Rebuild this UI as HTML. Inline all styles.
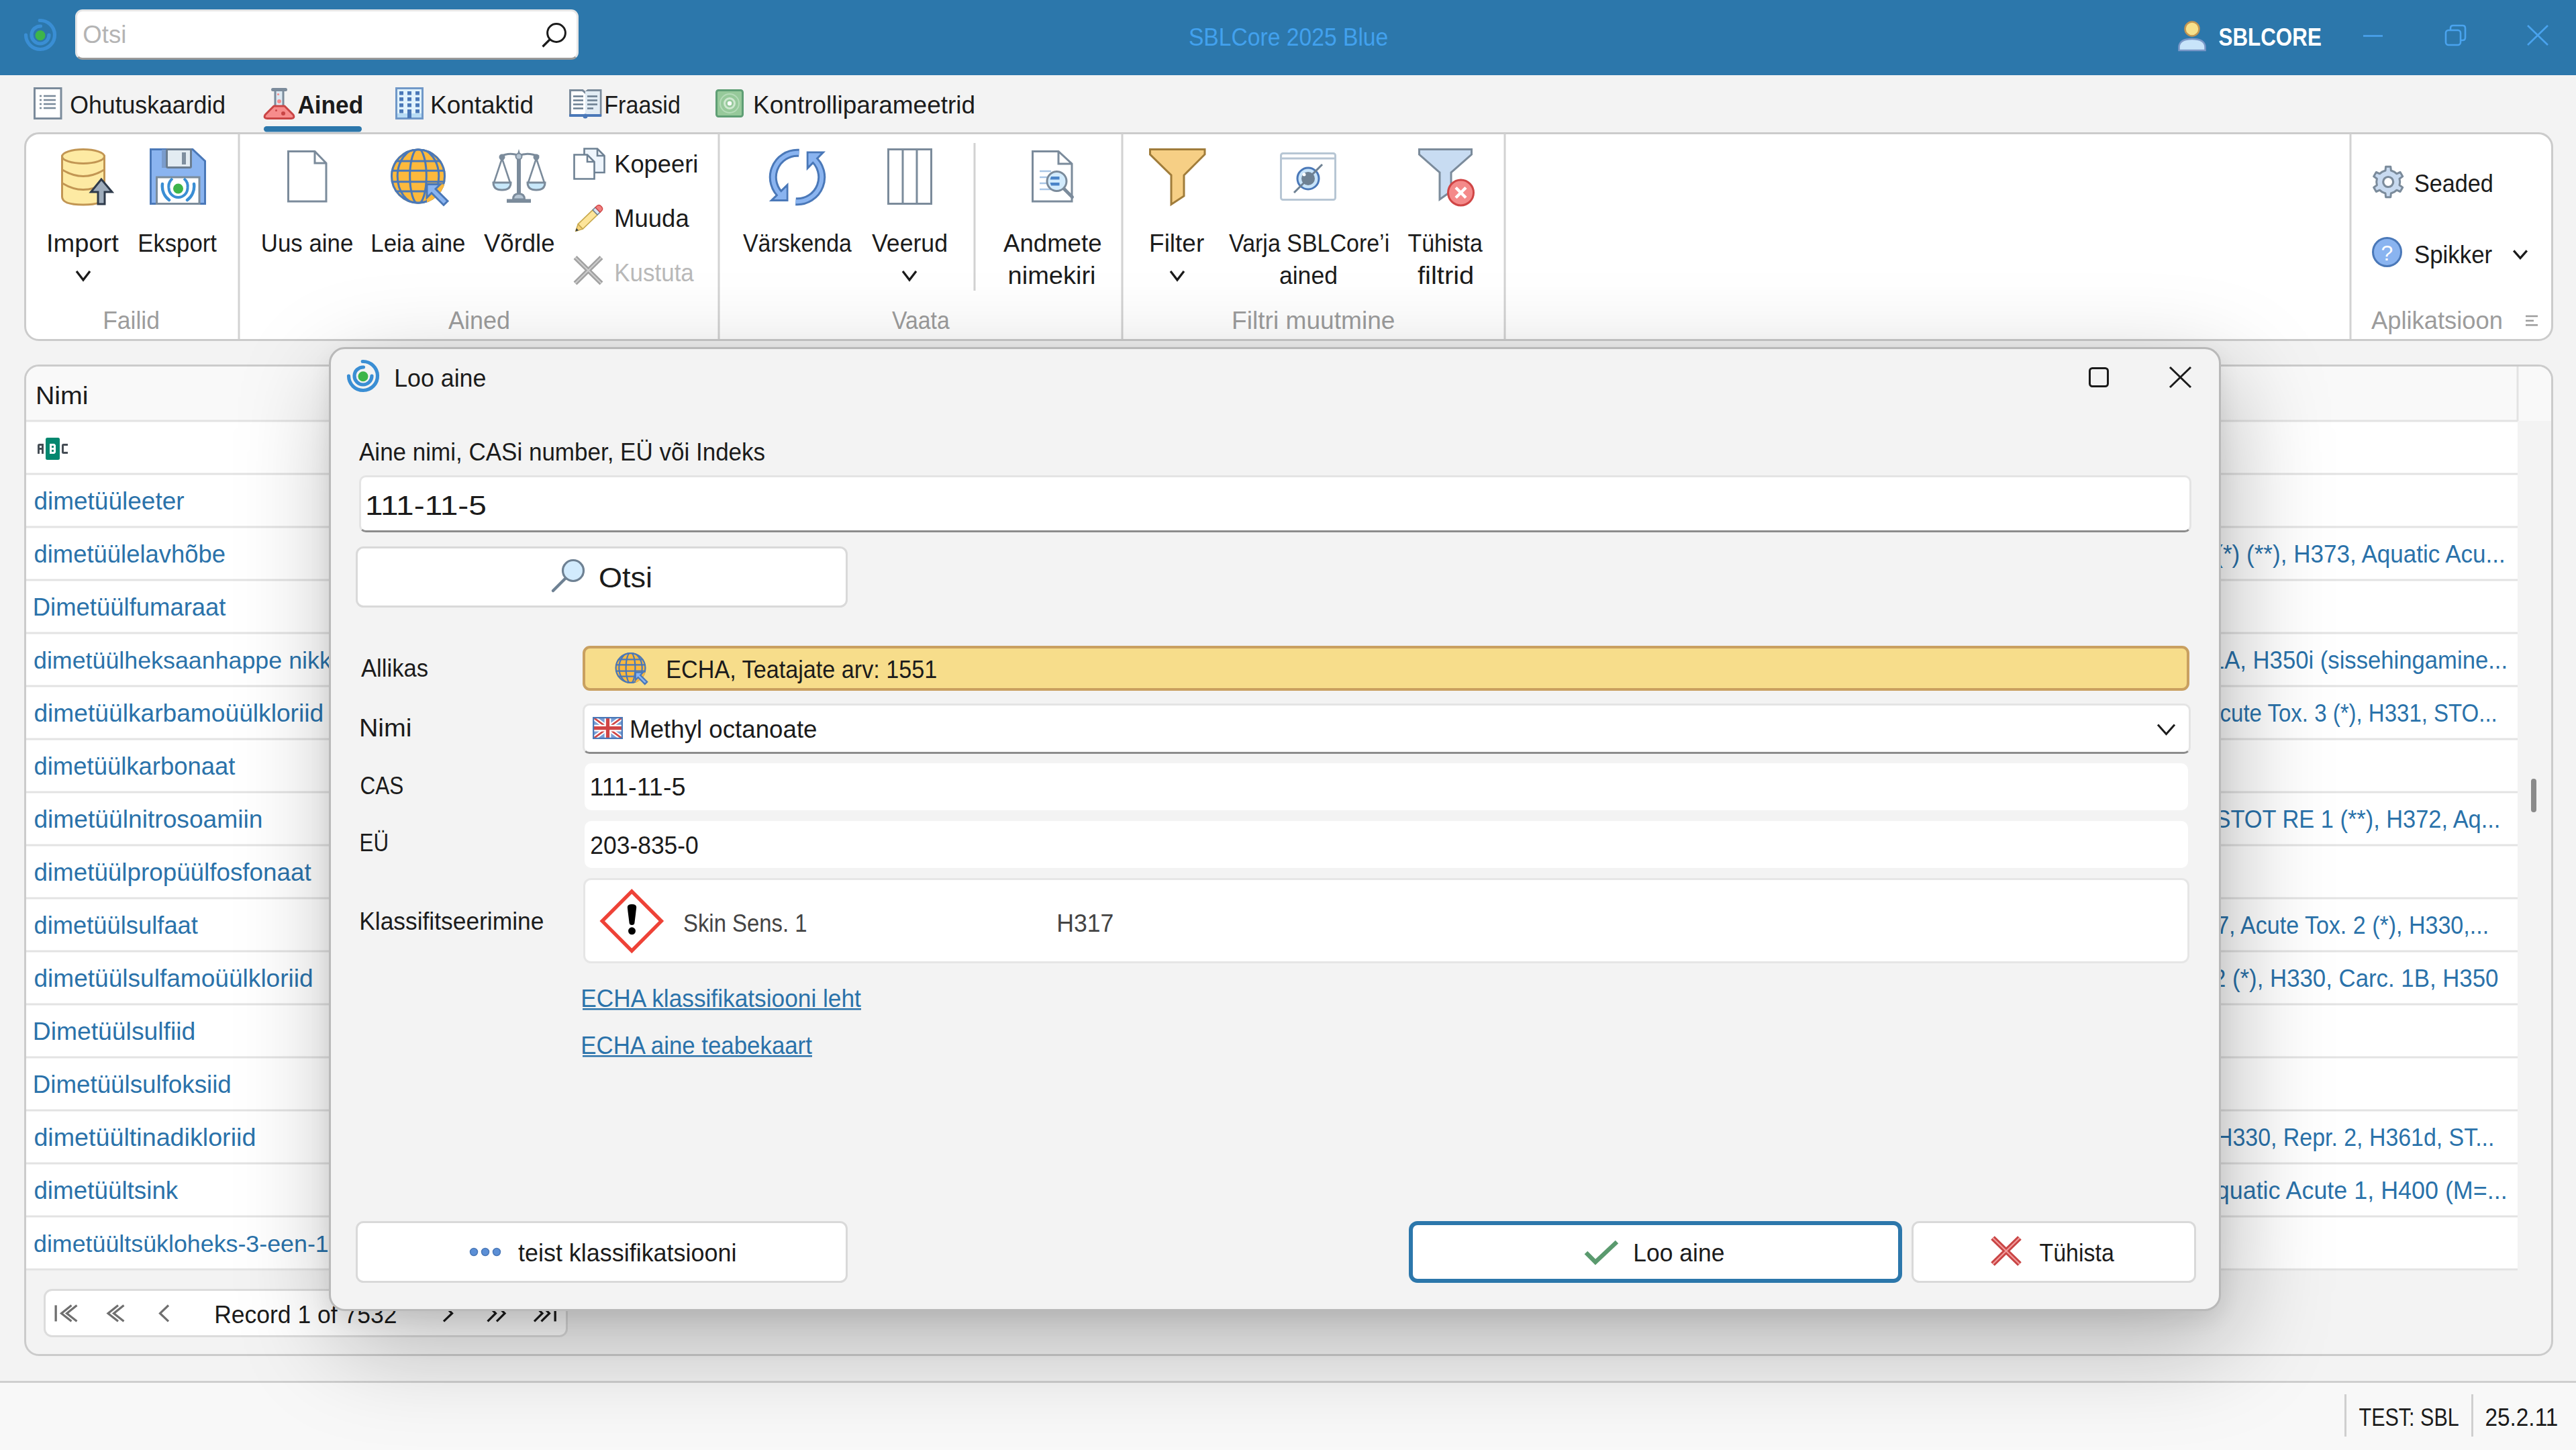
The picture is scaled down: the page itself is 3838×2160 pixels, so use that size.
<!DOCTYPE html>
<html><head><meta charset="utf-8"><title>SBLCore</title><style>
html,body{margin:0;padding:0;}
body{width:3838px;height:2160px;overflow:hidden;background:#f3f3f3;position:relative;font-family:'Liberation Sans', sans-serif;}
.abs{position:absolute;box-sizing:border-box;}
svg text{font-family:'Liberation Sans', sans-serif;}
</style></head>
<body>
<div class="abs" style="left:0;top:0;width:3838px;height:112px;background:#2c77ab"></div>
<div class="abs" style="left:112px;top:14px;width:750px;height:75px;background:#fff;border-radius:11px;border:3px solid #e6e6e6;border-bottom:3px solid #9a9a9a;"></div>
<div class="abs" style="left:36px;top:197px;width:3768px;height:311px;background:#fff;border:3px solid #cbcbcb;border-radius:22px"></div>
<div class="abs" style="left:36px;top:543px;width:3768px;height:1477px;background:#f3f3f3;border:3px solid #cbcbcb;border-radius:22px;overflow:hidden">
  <div class="abs" style="left:0;top:0;width:3762px;height:81px;background:#f9f9f9"></div>
  <div class="abs" style="left:0;top:82px;width:3712px;height:1263px;background:#fff"></div>
</div>
<div class="abs" style="left:0;top:2057px;width:3838px;height:103px;background:#f8f8f8;border-top:3px solid #cfcfcf"></div>
<svg class="abs" style="left:0;top:0" width="3838" height="2160" viewBox="0 0 3838 2160">
<rect x="354.5" y="199" width="3" height="306" fill="#d2d2d2"/>
<rect x="1069.5" y="199" width="3" height="306" fill="#d2d2d2"/>
<rect x="1670.5" y="199" width="3" height="306" fill="#d2d2d2"/>
<rect x="2240.5" y="199" width="3" height="306" fill="#d2d2d2"/>
<rect x="3500.5" y="199" width="3" height="306" fill="#d2d2d2"/>
<rect x="1450.5" y="213" width="3" height="220" fill="#d2d2d2"/>
<rect x="39" y="625.5" width="3712" height="3" fill="#e3e3e3"/>
<rect x="39" y="704.5" width="3712" height="3" fill="#e3e3e3"/>
<rect x="39" y="783.5" width="3712" height="3" fill="#e3e3e3"/>
<rect x="39" y="862.5" width="3712" height="3" fill="#e3e3e3"/>
<rect x="39" y="941.5" width="3712" height="3" fill="#e3e3e3"/>
<rect x="39" y="1020.5" width="3712" height="3" fill="#e3e3e3"/>
<rect x="39" y="1099.5" width="3712" height="3" fill="#e3e3e3"/>
<rect x="39" y="1178.5" width="3712" height="3" fill="#e3e3e3"/>
<rect x="39" y="1257.5" width="3712" height="3" fill="#e3e3e3"/>
<rect x="39" y="1336.5" width="3712" height="3" fill="#e3e3e3"/>
<rect x="39" y="1415.5" width="3712" height="3" fill="#e3e3e3"/>
<rect x="39" y="1494.5" width="3712" height="3" fill="#e3e3e3"/>
<rect x="39" y="1573.5" width="3712" height="3" fill="#e3e3e3"/>
<rect x="39" y="1652.5" width="3712" height="3" fill="#e3e3e3"/>
<rect x="39" y="1731.5" width="3712" height="3" fill="#e3e3e3"/>
<rect x="39" y="1810.5" width="3712" height="3" fill="#e3e3e3"/>
<rect x="39" y="1889.5" width="3712" height="3" fill="#e3e3e3"/>
<rect x="3749.5" y="546" width="3" height="81" fill="#e3e3e3"/>
<rect x="3771" y="1160" width="8" height="50" rx="4" fill="#8a8a8a"/>
<rect x="66.5" y="1921.5" width="778" height="69" rx="11" fill="#fff" stroke="#dcdcdc" stroke-width="3"/>
<rect x="3493" y="2077" width="3" height="63" fill="#cfcfcf"/>
<rect x="3682" y="2077" width="3" height="63" fill="#cfcfcf"/>
<rect x="393" y="188" width="146" height="8.5" rx="4.2" fill="#2c77ab"/>
<text x="50" y="996" font-size="35.8" fill="#2a72aa">dimetüülheksaanhappe nikkel</text>
<text x="50" y="1865" font-size="35.8" fill="#2a72aa">dimetüültsükloheks-3-een-1-karbaldehüüd</text>
<text x="2749.0" y="838" font-size="37" fill="#2a72aa" font-weight="400" textLength="983.8" lengthAdjust="spacingAndGlyphs">Acute Tox. 4 (*), H332, STOT RE 2 (*) (**), H373, Aquatic Acu...</text>
<text x="2886.5" y="996" font-size="37" fill="#2a72aa" font-weight="400" textLength="849.6" lengthAdjust="spacingAndGlyphs">Skin Sens. 1, H317, Carc. 1A, H350i (sissehingamine...</text>
<text x="3285.6" y="1075" font-size="37" fill="#2a72aa" font-weight="400" textLength="435.2" lengthAdjust="spacingAndGlyphs">Acute Tox. 3 (*), H331, STO...</text>
<text x="2792.7" y="1233" font-size="37" fill="#2a72aa" font-weight="400" textLength="932.7" lengthAdjust="spacingAndGlyphs">Acute Tox. 3 (*), H301, Carc. 1B, STOT RE 1 (**), H372, Aq...</text>
<text x="3029.8" y="1391" font-size="37" fill="#2a72aa" font-weight="400" textLength="678.3" lengthAdjust="spacingAndGlyphs">Skin Sens. 1, H317, Acute Tox. 2 (*), H330,...</text>
<text x="3125.5" y="1470" font-size="37" fill="#2a72aa" font-weight="400" textLength="596.9" lengthAdjust="spacingAndGlyphs">Acute Tox. 2 (*), H330, Carc. 1B, H350</text>
<text x="3052.1" y="1707" font-size="37" fill="#2a72aa" font-weight="400" textLength="664.3" lengthAdjust="spacingAndGlyphs">Acute Tox. 2 (*), H330, Repr. 2, H361d, ST...</text>
<text x="2909.5" y="1786" font-size="37" fill="#2a72aa" font-weight="400" textLength="826.1" lengthAdjust="spacingAndGlyphs">Acute Tox. 3 (*), H301, Aquatic Acute 1, H400 (M=...</text>
<text x="123.3" y="64" font-size="37" fill="#b4b4b4" font-weight="400" textLength="65.1" lengthAdjust="spacingAndGlyphs">Otsi</text>
<text x="1770.9" y="68" font-size="37" fill="#42a1ee" font-weight="400" textLength="297.4" lengthAdjust="spacingAndGlyphs">SBLCore 2025 Blue</text>
<text x="3305.5" y="68" font-size="37" fill="#ffffff" font-weight="700" textLength="153.3" lengthAdjust="spacingAndGlyphs">SBLCORE</text>
<text x="104.3" y="169" font-size="37" fill="#1b1b1b" font-weight="400" textLength="231.7" lengthAdjust="spacingAndGlyphs">Ohutuskaardid</text>
<text x="443.4" y="169" font-size="37" fill="#1b1b1b" font-weight="700" textLength="97.8" lengthAdjust="spacingAndGlyphs">Ained</text>
<text x="641.1" y="169" font-size="37" fill="#1b1b1b" font-weight="400" textLength="154.0" lengthAdjust="spacingAndGlyphs">Kontaktid</text>
<text x="900.3" y="169" font-size="37" fill="#1b1b1b" font-weight="400" textLength="113.6" lengthAdjust="spacingAndGlyphs">Fraasid</text>
<text x="1122.1" y="169" font-size="37" fill="#1b1b1b" font-weight="400" textLength="331.0" lengthAdjust="spacingAndGlyphs">Kontrolliparameetrid</text>
<text x="69.0" y="375" font-size="37" fill="#1b1b1b" font-weight="400" textLength="107.8" lengthAdjust="spacingAndGlyphs">Import</text>
<text x="205.3" y="375" font-size="37" fill="#1b1b1b" font-weight="400" textLength="117.6" lengthAdjust="spacingAndGlyphs">Eksport</text>
<text x="388.8" y="375" font-size="37" fill="#1b1b1b" font-weight="400" textLength="137.6" lengthAdjust="spacingAndGlyphs">Uus aine</text>
<text x="552.3" y="375" font-size="37" fill="#1b1b1b" font-weight="400" textLength="141.1" lengthAdjust="spacingAndGlyphs">Leia aine</text>
<text x="721.0" y="375" font-size="37" fill="#1b1b1b" font-weight="400" textLength="105.5" lengthAdjust="spacingAndGlyphs">Võrdle</text>
<text x="915.2" y="257" font-size="37" fill="#1b1b1b" font-weight="400" textLength="125.2" lengthAdjust="spacingAndGlyphs">Kopeeri</text>
<text x="915.1" y="338" font-size="37" fill="#1b1b1b" font-weight="400" textLength="111.6" lengthAdjust="spacingAndGlyphs">Muuda</text>
<text x="915.3" y="419" font-size="37" fill="#b9b9b9" font-weight="400" textLength="118.5" lengthAdjust="spacingAndGlyphs">Kustuta</text>
<text x="1107.0" y="375" font-size="37" fill="#1b1b1b" font-weight="400" textLength="161.8" lengthAdjust="spacingAndGlyphs">Värskenda</text>
<text x="1299.0" y="375" font-size="37" fill="#1b1b1b" font-weight="400" textLength="113.0" lengthAdjust="spacingAndGlyphs">Veerud</text>
<text x="1495.0" y="375" font-size="37" fill="#1b1b1b" font-weight="400" textLength="146.5" lengthAdjust="spacingAndGlyphs">Andmete</text>
<text x="1501.6" y="423" font-size="37" fill="#1b1b1b" font-weight="400" textLength="130.9" lengthAdjust="spacingAndGlyphs">nimekiri</text>
<text x="1712.1" y="375" font-size="37" fill="#1b1b1b" font-weight="400" textLength="82.1" lengthAdjust="spacingAndGlyphs">Filter</text>
<text x="1831.0" y="375" font-size="37" fill="#1b1b1b" font-weight="400" textLength="239.2" lengthAdjust="spacingAndGlyphs">Varja SBLCore’i</text>
<text x="1905.9" y="423" font-size="37" fill="#1b1b1b" font-weight="400" textLength="87.1" lengthAdjust="spacingAndGlyphs">ained</text>
<text x="2097.5" y="375" font-size="37" fill="#1b1b1b" font-weight="400" textLength="111.3" lengthAdjust="spacingAndGlyphs">Tühista</text>
<text x="2112.0" y="423" font-size="37" fill="#1b1b1b" font-weight="400" textLength="84.2" lengthAdjust="spacingAndGlyphs">filtrid</text>
<text x="3596.9" y="286" font-size="37" fill="#1b1b1b" font-weight="400" textLength="118.0" lengthAdjust="spacingAndGlyphs">Seaded</text>
<text x="3596.9" y="392" font-size="37" fill="#1b1b1b" font-weight="400" textLength="116.3" lengthAdjust="spacingAndGlyphs">Spikker</text>
<text x="153.2" y="490" font-size="37" fill="#9c9c9c" font-weight="400" textLength="84.8" lengthAdjust="spacingAndGlyphs">Failid</text>
<text x="668.0" y="490" font-size="37" fill="#9c9c9c" font-weight="400" textLength="92.0" lengthAdjust="spacingAndGlyphs">Ained</text>
<text x="1329.0" y="490" font-size="37" fill="#9c9c9c" font-weight="400" textLength="85.8" lengthAdjust="spacingAndGlyphs">Vaata</text>
<text x="1835.1" y="490" font-size="37" fill="#9c9c9c" font-weight="400" textLength="243.4" lengthAdjust="spacingAndGlyphs">Filtri muutmine</text>
<text x="3533.0" y="490" font-size="37" fill="#9c9c9c" font-weight="400" textLength="196.0" lengthAdjust="spacingAndGlyphs">Aplikatsioon</text>
<text x="52.9" y="602" font-size="37" fill="#1b1b1b" font-weight="400" textLength="78.7" lengthAdjust="spacingAndGlyphs">Nimi</text>
<text x="50.4" y="759" font-size="37" fill="#2a72aa" font-weight="400" textLength="224.2" lengthAdjust="spacingAndGlyphs">dimetüüleeter</text>
<text x="50.5" y="838" font-size="37" fill="#2a72aa" font-weight="400" textLength="285.6" lengthAdjust="spacingAndGlyphs">dimetüülelavhõbe</text>
<text x="48.8" y="917" font-size="37" fill="#2a72aa" font-weight="400" textLength="287.7" lengthAdjust="spacingAndGlyphs">Dimetüülfumaraat</text>
<text x="50.4" y="1075" font-size="37" fill="#2a72aa" font-weight="400" textLength="431.8" lengthAdjust="spacingAndGlyphs">dimetüülkarbamoüülkloriid</text>
<text x="50.5" y="1154" font-size="37" fill="#2a72aa" font-weight="400" textLength="299.9" lengthAdjust="spacingAndGlyphs">dimetüülkarbonaat</text>
<text x="50.4" y="1233" font-size="37" fill="#2a72aa" font-weight="400" textLength="341.1" lengthAdjust="spacingAndGlyphs">dimetüülnitrosoamiin</text>
<text x="50.4" y="1312" font-size="37" fill="#2a72aa" font-weight="400" textLength="413.3" lengthAdjust="spacingAndGlyphs">dimetüülpropüülfosfonaat</text>
<text x="50.5" y="1391" font-size="37" fill="#2a72aa" font-weight="400" textLength="244.4" lengthAdjust="spacingAndGlyphs">dimetüülsulfaat</text>
<text x="50.4" y="1470" font-size="37" fill="#2a72aa" font-weight="400" textLength="416.3" lengthAdjust="spacingAndGlyphs">dimetüülsulfamoüülkloriid</text>
<text x="48.7" y="1549" font-size="37" fill="#2a72aa" font-weight="400" textLength="242.6" lengthAdjust="spacingAndGlyphs">Dimetüülsulfiid</text>
<text x="48.7" y="1628" font-size="37" fill="#2a72aa" font-weight="400" textLength="296.1" lengthAdjust="spacingAndGlyphs">Dimetüülsulfoksiid</text>
<text x="50.4" y="1707" font-size="37" fill="#2a72aa" font-weight="400" textLength="331.0" lengthAdjust="spacingAndGlyphs">dimetüültinadikloriid</text>
<text x="50.4" y="1786" font-size="37" fill="#2a72aa" font-weight="400" textLength="214.9" lengthAdjust="spacingAndGlyphs">dimetüültsink</text>
<text x="319.2" y="1971" font-size="37" fill="#1b1b1b" font-weight="400" textLength="272.2" lengthAdjust="spacingAndGlyphs">Record 1 of 7532</text>
<text x="3514.5" y="2124" font-size="37" fill="#1b1b1b" font-weight="400" textLength="149.2" lengthAdjust="spacingAndGlyphs">TEST: SBL</text>
<text x="3702.4" y="2124" font-size="37" fill="#1b1b1b" font-weight="400" textLength="108.9" lengthAdjust="spacingAndGlyphs">25.2.11</text>
<path d="M59.2,30.5 A21.5,21.5 0 1 1 38.5,52.0" fill="none" stroke="#3a8ed4" stroke-width="5.2" stroke-linecap="round"/><path d="M73.0,52.0 A13.0,13.0 0 1 1 60.5,39.0" fill="none" stroke="#3a8ed4" stroke-width="5.2" stroke-linecap="round"/><circle cx="60" cy="52.8" r="7.5" fill="#3db54a"/>
<circle cx="829" cy="49" r="13.4" fill="none" stroke="#1b1b1b" stroke-width="3"/><line x1="819.5" y1="58.5" x2="808.5" y2="69.5" stroke="#1b1b1b" stroke-width="3.2"/>
<circle cx="3266" cy="43" r="10.5" fill="#f7e18c" stroke="#c29653" stroke-width="2.5"/><path d="M3246.5,75 L3246.5,70 Q3247,58 3266,58 Q3285,58 3285.5,70 L3285.5,75 Z" fill="#c8e4fa" stroke="#7a98c8" stroke-width="2.5"/>
<line x1="3521" y1="53.5" x2="3550" y2="53.5" stroke="#4aa3ee" stroke-width="2.6"/>
<rect x="3644" y="45" width="22" height="22" rx="4" fill="none" stroke="#4aa3ee" stroke-width="2.6"/><path d="M3651,44 L3651,42 Q3651,38 3655,38 L3669,38 Q3673,38 3673,42 L3673,56 Q3673,60 3669,60 L3667,60" fill="none" stroke="#4aa3ee" stroke-width="2.6"/>
<path d="M3766,38 L3796,67 M3796,38 L3766,67" stroke="#4aa3ee" stroke-width="2.6"/>
<rect x="51.5" y="131.5" width="39.5" height="45" fill="#fff" stroke="#7b8b9b" stroke-width="3"/>
<rect x="59" y="141.7" width="3" height="2.6" fill="#7b8b9b"/><rect x="65" y="141.7" width="18" height="2.6" fill="#7b8b9b"/>
<rect x="59" y="147.7" width="3" height="2.6" fill="#7b8b9b"/><rect x="65" y="147.7" width="18" height="2.6" fill="#7b8b9b"/>
<rect x="59" y="153.7" width="3" height="2.6" fill="#7b8b9b"/><rect x="65" y="153.7" width="18" height="2.6" fill="#7b8b9b"/>
<rect x="59" y="159.7" width="3" height="2.6" fill="#7b8b9b"/><rect x="65" y="159.7" width="18" height="2.6" fill="#7b8b9b"/>
<path d="M407,134 L423,134 M410,134 L410,156 L395,172 Q393,176 398,176 L434,176 Q439,176 437,172 L422,156 L422,134" fill="#dde9f2" stroke="#7b8b9b" stroke-width="0"/>
<rect x="404" y="131" width="24" height="5" rx="2.5" fill="#7b8b9b"/>
<path d="M410,136 L410,157 M422,136 L422,157" stroke="#7b8b9b" stroke-width="3"/>
<path d="M408,158 L424,158 L437,171 Q440,176 434,176.5 L398,176.5 Q392,176 395,171 Z" fill="#f78c8c" stroke="#c94444" stroke-width="3" stroke-linejoin="round"/>
<circle cx="414.5" cy="140.5" r="1.6" fill="#f78c8c"/><circle cx="416" cy="151" r="3" fill="#f78c8c"/><circle cx="411.5" cy="164.5" r="1.5" fill="#c94444"/><circle cx="422" cy="169" r="3" fill="#c94444"/>
<rect x="590.5" y="131.5" width="39" height="45" fill="#e0f2fd" stroke="#7098c8" stroke-width="3"/>
<rect x="592" y="169" width="36" height="6" fill="#b8dcf5"/>
<rect x="595" y="136" width="6" height="5.5" fill="#4a78b8"/>
<rect x="607" y="136" width="6" height="5.5" fill="#4a78b8"/>
<rect x="619" y="136" width="6" height="5.5" fill="#4a78b8"/>
<rect x="595" y="145" width="6" height="5.5" fill="#4a78b8"/>
<rect x="607" y="145" width="6" height="5.5" fill="#4a78b8"/>
<rect x="619" y="145" width="6" height="5.5" fill="#4a78b8"/>
<rect x="595" y="154" width="6" height="5.5" fill="#4a78b8"/>
<rect x="607" y="154" width="6" height="5.5" fill="#4a78b8"/>
<rect x="619" y="154" width="6" height="5.5" fill="#4a78b8"/>
<rect x="595" y="163" width="6" height="5.5" fill="#4a78b8"/>
<rect x="607" y="163" width="6" height="5.5" fill="#4a78b8"/>
<rect x="619" y="163" width="6" height="5.5" fill="#4a78b8"/>
<rect x="607" y="163" width="6" height="13" fill="#4a78b8"/>
<path d="M849.5,134.5 L868,134.5 L872,138 L876,134.5 L895,134.5 L895,172 L849.5,172 Z" fill="#fff" stroke="#7b8b9b" stroke-width="3"/>
<rect x="872" y="136" width="21.5" height="35" fill="#e2ecf4"/>
<rect x="848" y="170" width="48" height="4" rx="1" fill="#4a78b8"/><circle cx="872" cy="173" r="3.5" fill="#4a78b8"/>
<rect x="854" y="142.2" width="15" height="2.6" fill="#6e8193"/>
<rect x="854" y="148.2" width="15" height="2.6" fill="#6e8193"/>
<rect x="854" y="154.2" width="15" height="2.6" fill="#6e8193"/>
<rect x="854" y="160.2" width="15" height="2.6" fill="#6e8193"/>
<rect x="875" y="142.2" width="15" height="2.6" fill="#6e8193"/>
<rect x="875" y="148.2" width="15" height="2.6" fill="#6e8193"/>
<rect x="875" y="154.2" width="15" height="2.6" fill="#6e8193"/>
<rect x="875" y="160.2" width="9" height="2.6" fill="#6e8193"/>
<rect x="1067.5" y="134.5" width="39" height="39" rx="3" fill="#96c99a" stroke="#5e9e74" stroke-width="3"/>
<circle cx="1087" cy="154" r="14" fill="none" stroke="#b5dbb8" stroke-width="2"/><circle cx="1087" cy="154" r="7.5" fill="none" stroke="#cfe8d0" stroke-width="3"/><circle cx="1087" cy="154" r="3.2" fill="#fff"/>
<path d="M92.5,233 L92.5,293 Q92.5,305 124,305 Q155.5,305 155.5,293 L155.5,233 Z" fill="#fdeaa3" stroke="#c29653" stroke-width="3"/>
<ellipse cx="124" cy="233" rx="31.5" ry="10.5" fill="#fdeaa3" stroke="#c29653" stroke-width="3"/>
<path d="M93,253 Q124,272 155,253 M93,273 Q124,292 155,273" fill="none" stroke="#c29653" stroke-width="3"/>
<path d="M151,267 L135.5,286 L146,286 L146,304 L156,304 L156,286 L167,286 Z" fill="#9eacbb" stroke="#2e3a4a" stroke-width="3" stroke-linejoin="miter"/>
<path d="M224.5,222.5 L287,222.5 L305.5,240 L305.5,303.5 L224.5,303.5 Z" fill="#8ab4f0" stroke="#4a78b8" stroke-width="3"/>
<rect x="241" y="223" width="8" height="27" fill="#7a9ccc"/>
<rect x="248.5" y="222.5" width="36" height="27" rx="1.5" fill="#e3ecf2" stroke="#6b7d90" stroke-width="3"/>
<rect x="271" y="227" width="6" height="18" fill="#7f8f9f"/>
<rect x="233.5" y="264" width="63.5" height="39.5" fill="#fff" stroke="#7b8c9c" stroke-width="3"/>
<circle cx="265.5" cy="281" r="7.5" fill="#3db54a"/>
<path d="M251.5,280 A14,14 0 0 0 279.5,280" fill="none" stroke="#3a8ed4" stroke-width="4"/><path d="M257,266 A15,15 0 0 0 251.5,280" fill="none" stroke="#3a8ed4" stroke-width="4"/><path d="M274,266 A15,15 0 0 1 279.5,280" fill="none" stroke="#3a8ed4" stroke-width="4"/>
<path d="M242,274 A26,26 0 0 0 252,298 M289,274 A26,26 0 0 1 279,298" fill="none" stroke="#3a8ed4" stroke-width="4.5" stroke-linecap="round"/>
<path d="M429.5,225.5 L469,225.5 L486,243 L486,300 L429.5,300 Z M469,225.5 L469,243 L486,243" fill="#fff" stroke="#7b8b9b" stroke-width="3" stroke-linejoin="miter"/>
<clipPath id="gclip623"><circle cx="623" cy="262.5" r="41"/></clipPath>
<circle cx="623" cy="262.5" r="41" fill="#fdb93c"/>
<g clip-path="url(#gclip623)" stroke="#4a78b8" stroke-width="3" fill="none">
<line x1="582" y1="239.9" x2="664" y2="239.9"/>
<line x1="582" y1="254.3" x2="664" y2="254.3"/>
<line x1="582" y1="270.7" x2="664" y2="270.7"/>
<line x1="582" y1="285.1" x2="664" y2="285.1"/>
<ellipse cx="623" cy="262.5" rx="12.3" ry="41"/>
<ellipse cx="623" cy="262.5" rx="30.8" ry="41"/>
</g>
<circle cx="623" cy="262.5" r="39.5" fill="none" stroke="#4a78b8" stroke-width="3"/>
<path d="M636.0,274.5 L636.0,306.5 L667.0,306.5 L667.0,274.5 Z" fill="#fdb93c" clip-path="url(#gclip623)"/>
<path d="M636.0,274.5 L656.0,274.5 L649.0,281.5 L667.0,299.5 L661.0,305.5 L643.0,287.5 L636.0,294.5 Z" fill="#8ab4f0" stroke="#4a78b8" stroke-width="3" stroke-linejoin="miter"/>
<rect x="770" y="232" width="6" height="62" fill="#7b8b9b"/><path d="M773,222 L777,236 L769,236 Z" fill="#7b8b9b"/><path d="M764.5,297 Q764.5,288.5 773,288.5 Q781.5,288.5 781.5,297 Z" fill="#b7c6d4" stroke="#7b8b9b" stroke-width="3"/><rect x="755" y="296.5" width="36" height="5.5" fill="#7b8b9b"/><path d="M745,233 Q760,226 773,232 Q786,226 803,233" fill="none" stroke="#7b8b9b" stroke-width="3"/><circle cx="773" cy="233" r="4.5" fill="#b7c6d4" stroke="#7b8b9b" stroke-width="2"/><circle cx="748" cy="234" r="4.5" fill="#7b8b9b"/><circle cx="799" cy="234" r="4.5" fill="#7b8b9b"/><path d="M748,236 L736,272 M748,236 L760,272 M799,236 L787,272 M799,236 L811,272" stroke="#7b8b9b" stroke-width="2.6"/><path d="M735,272 L761,272 Q761,283 748,283 Q735,283 735,272 Z" fill="#c8e8fa" stroke="#7b8b9b" stroke-width="3"/><path d="M786,272 L812,272 Q812,283 799,283 Q786,283 786,272 Z" fill="#c8e8fa" stroke="#7b8b9b" stroke-width="3"/>
<path d="M870.5,221.5 L890,221.5 L900.5,232 L900.5,257 L870.5,257 Z" fill="#eef5fc" stroke="#6e8193" stroke-width="2.6"/><path d="M890,221.5 L890,232 L900.5,232" fill="none" stroke="#6e8193" stroke-width="2.6"/>
<path d="M855.5,230.5 L875,230.5 L885.5,241 L885.5,266.5 L855.5,266.5 Z" fill="#fff" stroke="#6e8193" stroke-width="2.6"/><path d="M875,230.5 L875,241 L885.5,241" fill="none" stroke="#6e8193" stroke-width="2.6"/>
<g transform="translate(857.5,344.5) rotate(-44) scale(0.92)"><path d="M0,0 L11,-5.5 L11,5.5 Z" fill="#f6d27a" stroke="#c7a84c" stroke-width="1.6" stroke-linejoin="round"/><path d="M0,0 L4.5,-2.3 L4.5,2.3 Z" fill="#2e3a4a"/><rect x="11" y="-5.5" width="33" height="11" fill="#fde59a" stroke="#c7a84c" stroke-width="1.8"/><rect x="44" y="-5.5" width="6" height="11" fill="#dbe6f0" stroke="#6e8193" stroke-width="1.6"/><path d="M50,-5.5 L53,-5.5 Q58,-5.5 58,0 Q58,5.5 53,5.5 L50,5.5 Z" fill="#f08080" stroke="#d04545" stroke-width="1.5"/></g>
<path d="M857,383.5 L896,422 M896,383.5 L857,422" stroke="#a2a2a2" stroke-width="7"/><path d="M857,383.5 L896,422 M896,383.5 L857,422" stroke="#cdcdcd" stroke-width="2"/>
<path d="M1190.5,227.8 A36.3,36.3 0 0 0 1165.7,292.6" fill="none" stroke="#4a78b8" stroke-width="12"/>
<path d="M1185.5,300.2 A36.3,36.3 0 0 0 1210.3,235.4" fill="none" stroke="#4a78b8" stroke-width="12"/>
<path d="M1149.5,298.4 L1173,298.4 L1173,275.6 Z" fill="#8ab4f0" stroke="#4a78b8" stroke-width="3" stroke-linejoin="miter"/>
<path d="M1203.2,227 L1226.4,227 L1203.2,250.6 Z" fill="#8ab4f0" stroke="#4a78b8" stroke-width="3" stroke-linejoin="miter"/>
<path d="M1190.5,227.8 A36.3,36.3 0 0 0 1165.7,292.6" fill="none" stroke="#8ab4f0" stroke-width="6"/>
<path d="M1185.5,300.2 A36.3,36.3 0 0 0 1210.3,235.4" fill="none" stroke="#8ab4f0" stroke-width="6"/>
<path d="M1155,296.9 L1171.5,296.9 L1171.5,280 Z" fill="#8ab4f0"/>
<path d="M1204.7,228.5 L1221,228.5 L1204.7,245 Z" fill="#8ab4f0"/>
<rect x="1323.5" y="222.5" width="64" height="81" fill="#fff" stroke="#7b8b9b" stroke-width="3"/><path d="M1345,222.5 L1345,303.5 M1366,222.5 L1366,303.5" stroke="#7b8b9b" stroke-width="3"/>
<path d="M1538.5,225.5 L1577,225.5 L1597,244 L1597,300 L1538.5,300 Z M1577,225.5 L1577,244 L1597,244" fill="#fff" stroke="#7b8b9b" stroke-width="3"/>
<path d="M1549,255 L1566,255 M1549,264 L1562,264 M1549,273 L1562,273 M1549,282 L1566,282" stroke="#a9c6e6" stroke-width="2.4"/>
<line x1="1585" y1="281" x2="1597.5" y2="293.5" stroke="#7b8b9b" stroke-width="5" stroke-linecap="round"/>
<circle cx="1574.5" cy="270" r="14.5" fill="#d2ebfd" stroke="#7b8b9b" stroke-width="3"/><path d="M1566,263 L1578.5,263 L1578.5,267.5 L1564.5,267.5 Z M1564.5,272 L1578.5,272 L1578.5,276.5 L1566,276.5 Z" fill="#4a84c8"/>
<path d="M1713.5,222.5 L1795,222.5 L1795,230 L1764,261 L1764,292 L1745,304.5 L1745,261 L1713.5,230 Z" fill="#f6cf85" stroke="#a07c3a" stroke-width="3" stroke-linejoin="miter"/>
<rect x="1908.5" y="228.5" width="81" height="69" rx="3" fill="#fff" stroke="#b7c6d4" stroke-width="3"/><line x1="1909" y1="236" x2="1989" y2="236" stroke="#b7c6d4" stroke-width="3"/>
<circle cx="1949" cy="266" r="16" fill="#c8e4fa" stroke="#4a78b8" stroke-width="3"/><circle cx="1949" cy="266" r="10" fill="#6e8193"/><circle cx="1943" cy="260" r="2.5" fill="#fff"/>
<line x1="1928" y1="287" x2="1970" y2="245" stroke="#6e8193" stroke-width="3"/>
<path d="M2114.5,222.5 L2192.5,222.5 L2192.5,230 L2162,257 L2162,285 L2145,297 L2145,257 L2114.5,230 Z" fill="#c8dcf2" stroke="#7b8b9b" stroke-width="3"/>
<circle cx="2176.5" cy="287" r="19" fill="#f48a8a" stroke="#d04545" stroke-width="3"/><path d="M2169,279.5 L2184,294.5 M2184,279.5 L2169,294.5" stroke="#fff" stroke-width="4.5"/>
<polygon points="3549.4,255.8 3554.0,254.0 3554.6,248.3 3561.8,248.3 3562.4,254.0 3566.9,255.8 3570.8,258.8 3576.1,256.5 3579.7,262.8 3575.0,266.2 3575.7,271.0 3575.0,275.8 3579.7,279.2 3576.1,285.5 3570.8,283.2 3566.9,286.2 3562.4,288.0 3561.8,293.7 3554.6,293.7 3554.0,288.0 3549.4,286.2 3545.6,283.2 3540.3,285.5 3536.7,279.2 3541.4,275.8 3540.7,271.0 3541.4,266.2 3536.7,262.8 3540.3,256.5 3545.6,258.8" fill="#c8daf0" stroke="#7b8b9b" stroke-width="3" stroke-linejoin="round"/><circle cx="3558.2" cy="271" r="7.5" fill="#fff" stroke="#7b8b9b" stroke-width="3.2"/>
<circle cx="3556.5" cy="375.5" r="21" fill="#8ab4f0" stroke="#4a78b8" stroke-width="3"/><text x="3556.5" y="388" font-size="32" text-anchor="middle" fill="#fff" font-weight="400">?</text>
<path d="M114,403.9 L124,417.1 L134,403.9" fill="none" stroke="#1b1b1b" stroke-width="3.3"/>
<path d="M1345,403.9 L1355,417.1 L1365,403.9" fill="none" stroke="#1b1b1b" stroke-width="3.3"/>
<path d="M1744,403.9 L1754,417.1 L1764,403.9" fill="none" stroke="#1b1b1b" stroke-width="3.3"/>
<path d="M3745.2,373.4 L3755,384.6 L3764.8,373.4" fill="none" stroke="#1b1b1b" stroke-width="3.3"/>
<path d="M3763,471 L3781,471 M3763,477.7 L3775,477.7 M3763,484.3 L3781,484.3" stroke="#9c9c9c" stroke-width="2.4"/>
<rect x="68" y="652" width="21" height="33" rx="2.5" fill="#03876f"/>
<path fill-rule="evenodd" d="M56,676 L56,663.5 Q56,661 58.5,661 L65,661 L65,676 L62,676 L62,670 L59,670 L59,676 Z M59,664 L62,664 L62,667 L59,667 Z" fill="#454d55"/>
<path fill-rule="evenodd" d="M74,661 L81,661 L83,663 L83,674 L81,676 L74,676 Z M77,664 L80,664 L80,667 L77,667 Z M77,670 L80,670 L80,673 L77,673 Z" fill="#fff"/>
<path d="M92,673.5 L92,663.5 Q92,661 94.5,661 L101,661 L101,664 L95,664 L95,673 L101,673 L101,676 L94.5,676 Q92,676 92,673.5 Z" fill="#454d55"/>
<rect x="81.5" y="1944.4" width="3.3" height="24" fill="#6f6f6f"/><path d="M106.5,1944.5 L91.5,1956.4 L106.5,1968.3" fill="none" stroke="#6f6f6f" stroke-width="3.2"/><path d="M114.5,1944.5 L99.5,1956.4 L114.5,1968.3" fill="none" stroke="#6f6f6f" stroke-width="3.2"/>
<path d="M176,1944.5 L161,1956.4 L176,1968.3" fill="none" stroke="#6f6f6f" stroke-width="3.2"/><path d="M184.5,1944.5 L169.5,1956.4 L184.5,1968.3" fill="none" stroke="#6f6f6f" stroke-width="3.2"/>
<path d="M251,1944.5 L238.5,1956.4 L251,1968.3" fill="none" stroke="#6f6f6f" stroke-width="3.2"/>
<path d="M661,1944.5 L673.5,1956.4 L661,1968.3" fill="none" stroke="#1b1b1b" stroke-width="3.2"/>
<path d="M726.5,1944.5 L738.5,1956.4 L726.5,1968.3" fill="none" stroke="#1b1b1b" stroke-width="3.2"/><path d="M740,1944.5 L752,1956.4 L740,1968.3" fill="none" stroke="#1b1b1b" stroke-width="3.2"/>
<path d="M796,1944.5 L808,1956.4 L796,1968.3" fill="none" stroke="#1b1b1b" stroke-width="3.2"/><path d="M806.5,1944.5 L818.5,1956.4 L806.5,1968.3" fill="none" stroke="#1b1b1b" stroke-width="3.2"/><rect x="825.5" y="1944.4" width="3.3" height="24" fill="#1b1b1b"/>
</svg>
<div class="abs" style="left:490px;top:517px;width:2819px;height:1436px;background:#f3f3f3;border:3px solid #b9b9b9;border-radius:24px;overflow:hidden;box-shadow:0 12px 32px rgba(0,0,0,0.07), 14px 46px 150px rgba(0,0,0,0.27)">
<div class="abs" style="left:42px;top:188px;width:2730px;height:85px;background:#fff;border:3px solid #e4e4e4;border-bottom:3px solid #8c8c8c;border-radius:10px"></div>
<div class="abs" style="left:375px;top:528px;width:2396px;height:75px;background:#fff;border:3px solid #e4e4e4;border-bottom:3px solid #8c8c8c;border-radius:10px"></div>
<svg class="abs" style="left:-493px;top:-520px" width="3838" height="2160" viewBox="0 0 3838 2160">
<rect x="531.5" y="815.5" width="730" height="88" rx="10" fill="#fff" stroke="#d9d9d9" stroke-width="3"/>
<rect x="870" y="964" width="2390" height="63" rx="9" fill="#f7dd8b" stroke="#c9a060" stroke-width="4"/>
<rect x="871" y="1137" width="2389" height="70" rx="10" fill="#fff"/>
<rect x="871" y="1223" width="2389" height="70" rx="10" fill="#fff"/>
<rect x="870.5" y="1309.5" width="2390" height="124" rx="10" fill="#fff" stroke="#e6e6e6" stroke-width="3"/>
<rect x="868" y="1502" width="415" height="2.5" fill="#2a72aa"/><rect x="868" y="1572" width="342" height="2.5" fill="#2a72aa"/>
<rect x="531.5" y="1820.5" width="730" height="89" rx="10" fill="#fff" stroke="#d9d9d9" stroke-width="3"/>
<rect x="2102" y="1822" width="729" height="86" rx="10" fill="#fff" stroke="#2c77ab" stroke-width="6"/>
<rect x="2849.5" y="1820.5" width="421" height="89" rx="10" fill="#fff" stroke="#d9d9d9" stroke-width="3"/>
<text x="587.2" y="576" font-size="37" fill="#1b1b1b" font-weight="400" textLength="137.2" lengthAdjust="spacingAndGlyphs">Loo aine</text>
<text x="535.0" y="686" font-size="37" fill="#1b1b1b" font-weight="400" textLength="605.1" lengthAdjust="spacingAndGlyphs">Aine nimi, CASi number, EÜ või Indeks</text>
<text x="544.0" y="767" font-size="41" fill="#1b1b1b" font-weight="400" textLength="180.9" lengthAdjust="spacingAndGlyphs">111-11-5</text>
<text x="891.9" y="875" font-size="42" fill="#1b1b1b" font-weight="400" textLength="80.1" lengthAdjust="spacingAndGlyphs">Otsi</text>
<text x="538.0" y="1008" font-size="37" fill="#1b1b1b" font-weight="400" textLength="100.1" lengthAdjust="spacingAndGlyphs">Allikas</text>
<text x="992.3" y="1010" font-size="37" fill="#1b1b1b" font-weight="400" textLength="404.0" lengthAdjust="spacingAndGlyphs">ECHA, Teatajate arv: 1551</text>
<text x="534.9" y="1097" font-size="37" fill="#1b1b1b" font-weight="400" textLength="78.7" lengthAdjust="spacingAndGlyphs">Nimi</text>
<text x="938.1" y="1099" font-size="37" fill="#1b1b1b" font-weight="400" textLength="279.4" lengthAdjust="spacingAndGlyphs">Methyl octanoate</text>
<text x="536.5" y="1183" font-size="37" fill="#1b1b1b" font-weight="400" textLength="64.8" lengthAdjust="spacingAndGlyphs">CAS</text>
<text x="878.6" y="1185" font-size="37" fill="#1b1b1b" font-weight="400" textLength="142.9" lengthAdjust="spacingAndGlyphs">111-11-5</text>
<text x="535.6" y="1268" font-size="37" fill="#1b1b1b" font-weight="400" textLength="43.5" lengthAdjust="spacingAndGlyphs">EÜ</text>
<text x="879.3" y="1272" font-size="37" fill="#1b1b1b" font-weight="400" textLength="161.5" lengthAdjust="spacingAndGlyphs">203-835-0</text>
<text x="535.2" y="1385" font-size="37" fill="#1b1b1b" font-weight="400" textLength="275.2" lengthAdjust="spacingAndGlyphs">Klassifitseerimine</text>
<text x="1018.0" y="1388" font-size="37" fill="#444444" font-weight="400" textLength="184.4" lengthAdjust="spacingAndGlyphs">Skin Sens. 1</text>
<text x="1574.2" y="1388" font-size="37" fill="#444444" font-weight="400" textLength="85.2" lengthAdjust="spacingAndGlyphs">H317</text>
<text x="865.3" y="1500" font-size="37" fill="#2a72aa" font-weight="400" textLength="417.6" lengthAdjust="spacingAndGlyphs">ECHA klassifikatsiooni leht</text>
<text x="865.3" y="1570" font-size="37" fill="#2a72aa" font-weight="400" textLength="344.6" lengthAdjust="spacingAndGlyphs">ECHA aine teabekaart</text>
<text x="772.0" y="1879" font-size="37" fill="#1b1b1b" font-weight="400" textLength="325.4" lengthAdjust="spacingAndGlyphs">teist klassifikatsiooni</text>
<text x="2433.2" y="1879" font-size="37" fill="#1b1b1b" font-weight="400" textLength="136.2" lengthAdjust="spacingAndGlyphs">Loo aine</text>
<text x="3038.5" y="1879" font-size="37" fill="#1b1b1b" font-weight="400" textLength="111.3" lengthAdjust="spacingAndGlyphs">Tühista</text>
<path d="M540.2,538.5 A21.5,21.5 0 1 1 519.5,560.0" fill="none" stroke="#3a8ed4" stroke-width="5.2" stroke-linecap="round"/><path d="M554.0,560.0 A13.0,13.0 0 1 1 541.5,547.0" fill="none" stroke="#3a8ed4" stroke-width="5.2" stroke-linecap="round"/><circle cx="541" cy="560.8" r="7.5" fill="#3db54a"/>
<rect x="3113.5" y="548.5" width="27" height="27" rx="4" fill="none" stroke="#1b1b1b" stroke-width="3"/>
<path d="M3233,547 L3264,577 M3264,547 L3233,577" stroke="#1b1b1b" stroke-width="3"/>
<circle cx="854" cy="850" r="15.5" fill="#d2ebfd" stroke="#6e8193" stroke-width="3.2"/><line x1="842" y1="862" x2="824" y2="880" stroke="#6e8193" stroke-width="4.5" stroke-linecap="round"/>
<clipPath id="gclip939"><circle cx="939.5" cy="995" r="23"/></clipPath>
<circle cx="939.5" cy="995" r="23" fill="#fdb93c"/>
<g clip-path="url(#gclip939)" stroke="#4a78b8" stroke-width="2.2" fill="none">
<line x1="916.5" y1="982.4" x2="962.5" y2="982.4"/>
<line x1="916.5" y1="990.4" x2="962.5" y2="990.4"/>
<line x1="916.5" y1="999.6" x2="962.5" y2="999.6"/>
<line x1="916.5" y1="1007.6" x2="962.5" y2="1007.6"/>
<ellipse cx="939.5" cy="995" rx="6.9" ry="23"/>
<ellipse cx="939.5" cy="995" rx="17.2" ry="23"/>
</g>
<circle cx="939.5" cy="995" r="21.9" fill="none" stroke="#4a78b8" stroke-width="2.2"/>
<path d="M946.8,1001.7 L946.8,1019.7 L964.2,1019.7 L964.2,1001.7 Z" fill="#fdb93c" clip-path="url(#gclip939)"/>
<path d="M946.8,1001.7 L958.0,1001.7 L954.1,1005.7 L964.2,1015.8 L960.8,1019.1 L950.7,1009.0 L946.8,1013.0 Z" fill="#8ab4f0" stroke="#4a78b8" stroke-width="2.2" stroke-linejoin="miter"/>
<svg x="883" y="1068" width="45" height="33" viewBox="0 0 60 44"><rect x="0" y="0" width="60" height="44" fill="#7a9fd6"/><path d="M0,0 L60,44 M60,0 L0,44" stroke="#fff" stroke-width="9"/><path d="M0,0 L60,44 M60,0 L0,44" stroke="#d04545" stroke-width="3.5"/><path d="M30,0 L30,44 M0,22 L60,22" stroke="#fff" stroke-width="13"/><path d="M30,0 L30,44 M0,22 L60,22" stroke="#d04545" stroke-width="7"/><rect x="1.5" y="1.5" width="57" height="41" fill="none" stroke="#4a78b8" stroke-width="3"/></svg>
<path d="M3215.0,1079.5 L3227.5,1093.5 L3240.0,1079.5" fill="none" stroke="#1b1b1b" stroke-width="3"/>
<path d="M941.3,1327.8 L985.4,1372.1 L941.3,1416.4 L897.2,1372.1 Z" fill="#fff" stroke="#ee4237" stroke-width="5.3"/>
<path d="M934.8,1352 Q934.5,1347 941.5,1347 Q948.5,1347 948.2,1352 L945.4,1375 Q945,1378 941.5,1378 Q938,1378 937.6,1375 Z" fill="#000"/><circle cx="941.5" cy="1386.8" r="5.5" fill="#000"/>
<circle cx="706" cy="1865" r="5.5" fill="#5b8fd6" stroke="#4a78b8" stroke-width="1.5"/>
<circle cx="723" cy="1865" r="5.5" fill="#5b8fd6" stroke="#4a78b8" stroke-width="1.5"/>
<circle cx="740" cy="1865" r="5.5" fill="#5b8fd6" stroke="#4a78b8" stroke-width="1.5"/>
<path d="M2363,1866 L2377,1880 L2409,1850" fill="none" stroke="#5a9a6e" stroke-width="6.5"/>
<path d="M2969,1844 L3009,1883 M3009,1844 L2969,1883" stroke="#c94444" stroke-width="8"/><path d="M2969,1844 L3009,1883 M3009,1844 L2969,1883" stroke="#f29a9a" stroke-width="2.2"/>
</svg>
</div>
</body></html>
